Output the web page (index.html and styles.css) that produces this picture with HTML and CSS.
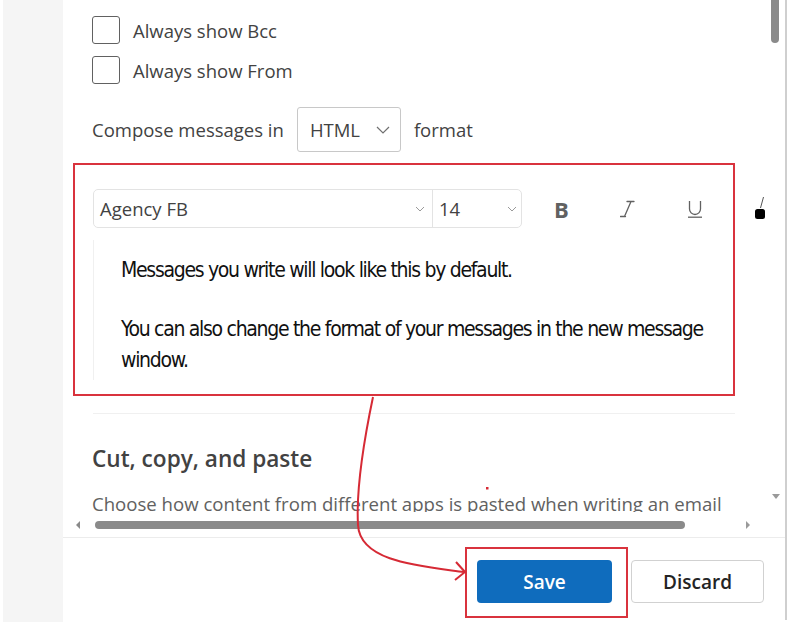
FILE: index.html
```html
<!DOCTYPE html>
<html lang="en">
<head>
<meta charset="utf-8">
<title>Compose settings</title>
<link rel="stylesheet" href="styles.css">
</head>
<body>
<div class="app">
  <aside class="rail"></aside>
  <main class="panel">
    <div class="scroller">
      <div class="content">
        <div class="check"><span class="box"></span><span>Always show Bcc</span></div>
        <div class="check"><span class="box"></span><span>Always show From</span></div>
        <div class="compose">
          <span>Compose messages in</span>
          <div class="select">HTML
            <svg class="chev" width="14" height="8" viewBox="0 0 14 8"><path d="M1 1l6 6 6-6" fill="none" stroke="#707070" stroke-width="1.2"/></svg>
          </div>
          <span>format</span>
        </div>
        <div class="editor-box">
          <div class="toolbar">
            <div class="selects">
              <div class="font-sel">Agency FB
                <svg class="chev-s" width="10" height="6" viewBox="0 0 10 6"><path d="M1 1l4 4 4-4" fill="none" stroke="#9a9a9a" stroke-width="1"/></svg>
              </div>
              <div class="size-sel">14
                <svg class="chev-s" width="10" height="6" viewBox="0 0 10 6"><path d="M1 1l4 4 4-4" fill="none" stroke="#9a9a9a" stroke-width="1"/></svg>
              </div>
            </div>
            <span class="tb tb-b">B</span>
            <span class="tb">
              <svg width="16" height="18" viewBox="0 0 16 18"><path d="M7 1.5h7M5.5 16.5h-5M11 1.5L4.5 16.5" fill="none" stroke="#616161" stroke-width="1.3" stroke-linecap="round"/></svg>
            </span>
            <span class="tb">
              <svg width="16" height="18" viewBox="0 0 16 18"><path d="M2.5 1v8a5.5 5.5 0 0 0 11 0V1" fill="none" stroke="#616161" stroke-width="1.3"/><path d="M1 17.2h14" stroke="#616161" stroke-width="1.3"/></svg>
            </span>
            <span class="tb tb-color">
              <svg width="12" height="24" viewBox="0 0 12 24"><path d="M9.5 1L6.5 12" stroke="#555" stroke-width="1"/><rect x="1" y="13" width="10" height="10" rx="2.5" fill="#000"/></svg>
            </span>
          </div>
          <div class="editor">
            <p>Messages you write will look like this by default.</p>
            <p>You can also change the format of your messages in the new message window.</p>
          </div>
        </div>
        <div class="divider"></div>
        <h2 class="heading">Cut, copy, and paste</h2>
        <p class="desc">Choose how content from different apps is pasted when writing an email</p>
      </div>
      <div class="vscroll">
        <div class="vthumb"></div>
        <span class="down"></span>
      </div>
    </div>
    <div class="hscroll">
      <span class="left"></span>
      <div class="hthumb"></div>
      <span class="right"></span>
    </div>
    <footer class="footer">
      <div class="save-mark"><button class="btn btn-primary">Save</button></div>
      <button class="btn btn-secondary">Discard</button>
    </footer>
  </main>
</div>
<svg class="annot" width="800" height="640" viewBox="0 0 800 640">
  <path d="M373 397 C364 440 356 490 358 525 C360 562 420 566 464 572" fill="none" stroke="#d62a35" stroke-width="2"/>
  <path d="M456 562 L465 572 L455 580" fill="none" stroke="#d62a35" stroke-width="2"/>
  <rect x="486" y="487" width="2.5" height="2.5" fill="#d62a35"/>
</svg>
</body>
</html>
```

FILE: styles.css
```css
* { box-sizing: border-box; }
html, body { margin: 0; padding: 0; background: #fff; }
body {
  font-family: "Open Sans", "Noto Sans", sans-serif;
  color: #424242;
  width: 800px;
  height: 640px;
  position: relative;
  overflow: hidden;
}
.app {
  display: flex;
  height: 622px;
  padding-left: 3px;
}
.rail {
  width: 60px;
  background: #f5f5f5;
}
.panel {
  width: 724px;
  height: 620px;
  border-right: 2px solid #cfcfcf;
  display: flex;
  flex-direction: column;
}
.scroller {
  position: relative;
  height: 512px;
  overflow: hidden;
}
.content {
  padding: 16px 0 0 29px;
  display: flex;
  flex-direction: column;
  align-items: flex-start;
}
.check {
  display: flex;
  align-items: center;
  gap: 13px;
  font-size: 18.5px;
  height: 28px;
  margin-bottom: 12px;
}
.box {
  width: 28px;
  height: 28px;
  border: 1px solid #616161;
  border-radius: 3px;
}
.compose {
  margin-top: 11px;
  display: flex;
  align-items: center;
  gap: 13px;
  font-size: 18.5px;
  height: 45px;
}
.select {
  width: 104px;
  height: 45px;
  border: 1px solid #c8c8c8;
  border-radius: 3px;
  display: flex;
  align-items: center;
  justify-content: space-between;
  padding: 0 10px 0 12px;
  font-size: 18.5px;
  color: #424242;
}
.editor-box {
  margin-top: 11px;
  margin-left: -19px;
  width: 662px;
  border: 2px solid #d9333d;
  padding: 24px 0 14px 18px;
}
.toolbar {
  display: flex;
  align-items: center;
  height: 39px;
  white-space: nowrap;
  width: 672px;
  overflow: hidden;
}
.selects {
  display: flex;
  height: 39px;
  border: 1px solid #e3e3e3;
  border-radius: 5px;
}
.font-sel, .size-sel {
  display: flex;
  align-items: center;
  justify-content: space-between;
  font-size: 18.5px;
  color: #424242;
}
.font-sel {
  width: 339px;
  padding: 0 7px 0 6px;
  border-right: 1px solid #e3e3e3;
}
.size-sel {
  width: 88px;
  padding: 0 4px 0 6px;
}
.tb {
  display: flex;
  align-items: center;
  justify-content: center;
  width: 16px;
  height: 39px;
  color: #616161;
}
.tb-b {
  margin-left: 32px;
  font-weight: 700;
  font-size: 22px;
}
.tb-b + .tb { margin-left: 51px; }
.tb + .tb + .tb { margin-left: 51px; }
.tb.tb-color {
  margin-left: 48px;
  width: 12px;
  height: 39px;
  align-items: flex-start;
  padding-top: 7px;
}
.editor {
  margin-top: 12px;
  height: 140px;
  border-left: 1px solid #f0f0f0;
  padding: 15px 0 0 27px;
  width: 630px;
  font-family: "Liberation Sans Narrow", "DejaVu Sans Condensed", sans-serif;
  font-size: 21px;
  letter-spacing: -1.3px;
  line-height: 31px;
  color: #111;
}
.editor p { margin: 0 0 28px; }
.divider {
  margin-top: 17px;
  margin-left: 1px;
  width: 642px;
  height: 1px;
  background: #f0f0f0;
}
.heading {
  margin: 30px 0 0;
  font-size: 22.6px;
  font-weight: 600;
  line-height: 30px;
  color: #424242;
}
.desc {
  margin: 18px 0 0;
  font-size: 18.6px;
  line-height: 24px;
  color: #616161;
  white-space: nowrap;
}
.vscroll {
  position: absolute;
  top: 0;
  left: 708px;
  width: 8px;
  height: 512px;
}
.vthumb {
  width: 8px;
  height: 43px;
  background: #8a8a8a;
  border-radius: 0 0 4px 4px;
}
.down {
  position: absolute;
  left: 1px;
  top: 494px;
  border-left: 4px solid transparent;
  border-right: 4px solid transparent;
  border-top: 5px solid #9a9a9a;
}
.hscroll {
  height: 25px;
  display: flex;
  align-items: center;
  padding-left: 13px;
}
.left {
  border-top: 4px solid transparent;
  border-bottom: 4px solid transparent;
  border-right: 4px solid #8a8a8a;
}
.hthumb {
  margin-left: 15px;
  width: 590px;
  height: 8px;
  border-radius: 4px;
  background: #8a8a8a;
}
.right {
  margin-left: 61px;
  border-top: 4px solid transparent;
  border-bottom: 4px solid transparent;
  border-left: 4px solid #9a9a9a;
}
.footer {
  flex: 1;
  border-top: 1px solid #ececec;
  display: flex;
  justify-content: flex-end;
  align-items: flex-start;
  padding: 9px 21px 0 0;
}
.save-mark {
  border: 2px solid #d9333d;
  padding: 11px 14px 13px 10px;
}
.btn {
  font-family: "Open Sans", "Noto Sans", sans-serif;
  font-size: 19px;
  font-weight: 600;
  height: 43px;
  border-radius: 4px;
  cursor: pointer;
}
.btn-primary {
  width: 135px;
  background: #0f6cbd;
  color: #fff;
  border: none;
}
.btn-secondary {
  margin: 13px 0 0 3px;
  width: 133px;
  background: #fff;
  color: #242424;
  border: 1px solid #d1d1d1;
}
.annot {
  position: absolute;
  left: 0;
  top: 0;
  pointer-events: none;
}
```
